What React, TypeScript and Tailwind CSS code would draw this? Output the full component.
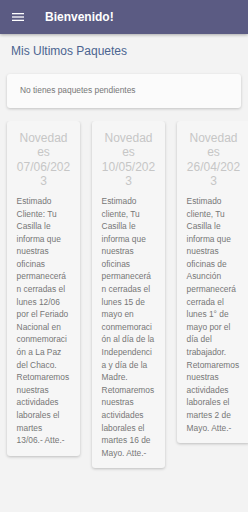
const news = [
  {
    date: "07/06/2023",
    body: "Estimado Cliente: Tu Casilla le informa que nuestras oficinas permanecerán cerradas el lunes 12/06 por el Feriado Nacional en conmemoración a La Paz del Chaco. Retomaremos nuestras actividades laborales el martes 13/06.- Atte.-",
  },
  {
    date: "10/05/2023",
    body: "Estimado cliente, Tu Casilla le informa que nuestras oficinas permanecerán cerradas el lunes 15 de mayo en conmemoración al día de la Independencia y día de la Madre. Retomaremos nuestras actividades laborales el martes 16 de Mayo. Atte.-",
  },
  {
    date: "26/04/2023",
    body: "Estimado cliente, Tu Casilla le informa que nuestras oficinas de Asunción permanecerá cerrada el lunes 1° de mayo por el día del trabajador. Retomaremos nuestras actividades laborales el martes 2 de Mayo. Atte.-",
  },
];

function NewsCard({ date, body }: { date: string; body: string }) {
  return (
    <div className="w-[73px] shrink-0 rounded-[3px] bg-[#f6f6f6] px-[9.6px] pt-[10px] pb-[9px] shadow-[0_1px_3px_rgba(0,0,0,0.22)] [overflow-wrap:break-word]">
      <h3 className="text-center text-[12px] leading-[14.4px] text-[#c6c6c6]">
        Novedades {date}
      </h3>
      <p className="mt-[6.6px] text-[8.4px] leading-[12.6px] text-[#767676]">{body}</p>
    </div>
  );
}

export default function App() {
  return (
    <div className="min-h-[512px] w-full bg-[#f3f3f3] font-['Liberation_Sans',Arial,sans-serif]">
      <header className="flex h-[34px] items-center bg-[#5b5b83] pl-[12px] shadow-[0_1px_3px_rgba(0,0,0,0.3)]">
        <svg width="12" height="8" viewBox="0 0 12 8" className="block">
          <rect x="0" y="0" width="12" height="1.3" fill="#fff" />
          <rect x="0" y="3.35" width="12" height="1.3" fill="#fff" />
          <rect x="0" y="6.7" width="12" height="1.3" fill="#fff" />
        </svg>
        <h1 className="ml-[21px] text-[12px] font-bold text-white">Bienvenido!</h1>
      </header>

      <main className="px-[7px]">
        <h2 className="mt-[10px] pl-[4px] text-[12px] leading-[14px] text-[#4b6490]">
          Mis Ultimos Paquetes
        </h2>

        <div className="mt-[16px] rounded-[3px] bg-[#fbfbfb] pt-[9.5px] pb-[12px] pl-[13px] text-[8.4px] leading-[12.6px] text-[#777] shadow-[0_1px_3px_rgba(0,0,0,0.2)]">
          No tienes paquetes pendientes
        </div>
      </main>

      <div className="mt-[12.6px] flex items-start gap-[12px] overflow-hidden px-[7px] pb-[10px]">
        {news.map((n) => (
          <NewsCard key={n.date} date={n.date} body={n.body} />
        ))}
      </div>
    </div>
  );
}
